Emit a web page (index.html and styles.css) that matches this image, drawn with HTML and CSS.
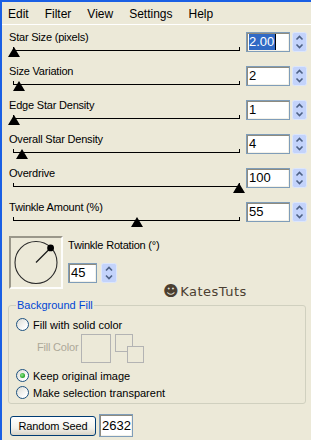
FILE: index.html
```html
<!DOCTYPE html>
<html>
<head>
<meta charset="utf-8">
<link rel="stylesheet" href="styles.css">
</head>
<body>
<div class="window">
  <div class="menubar">
    <span>Edit</span><span>Filter</span><span>View</span><span>Settings</span><span>Help</span>
  </div>

  <div class="params">
    <div class="row">
      <div class="ctl">
        <div class="lbl">Star Size (pixels)</div>
        <div class="track"><span class="thumb" style="left:-6px"></span></div>
      </div>
      <div class="num"><span class="sel">2.00</span></div>
      <svg class="spin" viewBox="0 0 15 20" width="15" height="20"><rect x=".5" y=".5" width="14" height="19" rx="2" fill="#c3d3fb" stroke="#dce6fb"/><path d="M4.5 7.5l3-3 3 3M4.5 12.5l3 3 3-3" fill="none" stroke="#4d6185" stroke-width="1.6"/></svg>
    </div>
    <div class="row">
      <div class="ctl">
        <div class="lbl">Size Variation</div>
        <div class="track"><span class="thumb" style="left:-1px"></span></div>
      </div>
      <div class="num">2</div>
      <svg class="spin" viewBox="0 0 15 20" width="15" height="20"><rect x=".5" y=".5" width="14" height="19" rx="2" fill="#c3d3fb" stroke="#dce6fb"/><path d="M4.5 7.5l3-3 3 3M4.5 12.5l3 3 3-3" fill="none" stroke="#4d6185" stroke-width="1.6"/></svg>
    </div>
    <div class="row">
      <div class="ctl">
        <div class="lbl">Edge Star Density</div>
        <div class="track"><span class="thumb" style="left:-6px"></span></div>
      </div>
      <div class="num">1</div>
      <svg class="spin" viewBox="0 0 15 20" width="15" height="20"><rect x=".5" y=".5" width="14" height="19" rx="2" fill="#c3d3fb" stroke="#dce6fb"/><path d="M4.5 7.5l3-3 3 3M4.5 12.5l3 3 3-3" fill="none" stroke="#4d6185" stroke-width="1.6"/></svg>
    </div>
    <div class="row">
      <div class="ctl">
        <div class="lbl">Overall Star Density</div>
        <div class="track"><span class="thumb" style="left:2px"></span></div>
      </div>
      <div class="num">4</div>
      <svg class="spin" viewBox="0 0 15 20" width="15" height="20"><rect x=".5" y=".5" width="14" height="19" rx="2" fill="#c3d3fb" stroke="#dce6fb"/><path d="M4.5 7.5l3-3 3 3M4.5 12.5l3 3 3-3" fill="none" stroke="#4d6185" stroke-width="1.6"/></svg>
    </div>
    <div class="row">
      <div class="ctl">
        <div class="lbl">Overdrive</div>
        <div class="track"><span class="thumb" style="left:219px"></span></div>
      </div>
      <div class="num">100</div>
      <svg class="spin" viewBox="0 0 15 20" width="15" height="20"><rect x=".5" y=".5" width="14" height="19" rx="2" fill="#c3d3fb" stroke="#dce6fb"/><path d="M4.5 7.5l3-3 3 3M4.5 12.5l3 3 3-3" fill="none" stroke="#4d6185" stroke-width="1.6"/></svg>
    </div>
    <div class="row">
      <div class="ctl">
        <div class="lbl">Twinkle Amount (%)</div>
        <div class="track"><span class="thumb" style="left:117px"></span></div>
      </div>
      <div class="num">55</div>
      <svg class="spin" viewBox="0 0 15 20" width="15" height="20"><rect x=".5" y=".5" width="14" height="19" rx="2" fill="#c3d3fb" stroke="#dce6fb"/><path d="M4.5 7.5l3-3 3 3M4.5 12.5l3 3 3-3" fill="none" stroke="#4d6185" stroke-width="1.6"/></svg>
    </div>
  </div>

  <div class="rot">
    <div class="dial">
      <svg viewBox="0 0 50 49" width="50" height="49">
        <circle cx="25" cy="24.5" r="21" fill="none" stroke="#2a2a2a" stroke-width="1.1"/>
        <line x1="25" y1="24.5" x2="39.5" y2="10" stroke="#1a1a1a" stroke-width="1.2"/>
        <circle cx="39.6" cy="9.9" r="3.4" fill="#000"/>
      </svg>
    </div>
    <div class="rotside">
      <div class="lbl">Twinkle Rotation (°)</div>
      <div class="numrow">
        <div class="num small">45</div>
        <svg class="spin wide" viewBox="0 0 16 20" width="16" height="20"><rect x=".5" y=".5" width="15" height="19" rx="2" fill="#c3d3fb" stroke="#dce6fb"/><path d="M5 7.5l3-3 3 3M5 12.5l3 3 3-3" fill="none" stroke="#4d6185" stroke-width="1.6"/></svg>
      </div>
    </div>
  </div>

  <div class="stamp"><span class="smile">☻</span>KatesTuts</div>

  <fieldset class="group">
    <legend>Background Fill</legend>
    <div class="opt first"><span class="radio"></span>Fill with solid color</div>
    <div class="fill">
      <span class="fill-lbl">Fill Color</span>
      <span class="swatch"></span>
      <span class="swatch-pair"><span class="sq a"></span><span class="sq b"></span></span>
    </div>
    <div class="opt"><span class="radio on"></span>Keep original image</div>
    <div class="opt"><span class="radio"></span>Make selection transparent</div>
  </fieldset>

  <div class="seedbar">
    <button class="btn">Random Seed</button>
    <div class="num seed">2632</div>
  </div>
</div>
</body>
</html>
```

FILE: styles.css
```css
body { margin:0; background:#ece9d8; font-family:"Liberation Sans", Arial, sans-serif; font-size:11px; color:#000; }

.window { position:relative; height:438px; border-top:2px solid #1a5fe4; border-left:2px solid #1a5fe4; }

.menubar { display:flex; gap:16px; height:19px; padding:3px 0 0 6px; line-height:19px; font-size:12px; border-bottom:1px solid #fff; }

.params { padding-top:7px; }
.row { display:flex; align-items:flex-start; height:34px; padding-left:7px; }
.ctl { width:232px; }
.lbl { line-height:13px; margin-top:-1px; letter-spacing:-0.2px; white-space:nowrap; }
.track { position:relative; width:225px; height:3px; margin:3px 0 0 4px; border:1px solid #000; border-top:0; }
.thumb { position:absolute; top:0; width:12px; height:10px; background:#000; clip-path:polygon(50% 0, 100% 100%, 0 100%); }

.num { box-sizing:border-box; width:44px; height:20px; margin-left:5px; padding-left:2px; background:#fff; border:1px solid #7f9db9; box-shadow:inset 1px 1px 0 #8e8b7f, inset -1px -1px 0 #f3f1e8; font-size:13px; line-height:18px; }
.sel { display:inline-block; margin-top:1px; padding-right:1px; line-height:16px; background:#316ac5; color:#fff; border-right:1px solid #000; }
.spin { display:block; margin-left:2px; }

.rot { display:flex; height:53px; padding-left:7px; }
.dial { box-sizing:border-box; width:54px; height:53px; border:2px solid; border-color:#9a978a #fdfdfb #fdfdfb #9a978a; }
.dial svg { display:block; }
.rotside { margin-left:5px; }
.rotside .lbl { margin-top:3px; }
.numrow { display:flex; margin-top:11px; }
.num.small { width:29px; margin-left:0; }
.spin.wide { margin-left:4px; }

.stamp { position:absolute; left:161px; top:282px; font-family:"DejaVu Sans", sans-serif; font-size:13px; line-height:15px; letter-spacing:0.5px; color:#4b3f31; }
.smile { font-size:15px; margin-right:1px; }

.group { margin:10px 5px 0 6px; padding:0 0 2px 7px; border:1px solid #d0d0bf; border-radius:3px; }
.group legend { padding:0 1px; line-height:13px; color:#0046d5; }

.opt { display:flex; align-items:center; height:17px; }
.opt.first { margin-top:4px; }
.radio { box-sizing:border-box; position:relative; width:13px; height:13px; margin-right:4px; border:1px solid #1c5180; border-radius:50%; background:linear-gradient(135deg, #dcdcd5, #fff 80%); }
.radio.on::after { content:""; position:absolute; left:3px; top:3px; width:5px; height:5px; border-radius:50%; background:radial-gradient(circle at 40% 40%, #8ee68e, #21a121 70%); }

.fill { display:flex; align-items:flex-start; height:34px; padding-left:21px; }
.fill-lbl { width:44px; margin-top:8px; line-height:13px; color:#aca899; letter-spacing:-0.2px; }
.swatch { box-sizing:border-box; width:30px; height:29px; margin-top:1px; border:1px solid #b3b3b3; }
.swatch-pair { position:relative; width:30px; height:30px; margin:1px 0 0 4px; }
.sq { position:absolute; box-sizing:border-box; border:1px solid #b3b3b3; background:#ece9d8; }
.sq.a { left:0; top:0; width:18px; height:18px; }
.sq.b { left:12px; top:12px; width:17px; height:17px; }

.seedbar { display:flex; align-items:center; margin-top:10px; padding-left:8px; }
.btn { box-sizing:border-box; width:86px; height:20px; padding:0; border:1px solid #003c74; border-radius:3px; background:linear-gradient(#fff, #f3f2ec 60%, #d8d4c7); font-family:"Liberation Sans", Arial, sans-serif; font-size:11px; letter-spacing:-0.1px; color:#000; }
.num.seed { width:34px; height:23px; margin-left:3px; line-height:21px; }
```
